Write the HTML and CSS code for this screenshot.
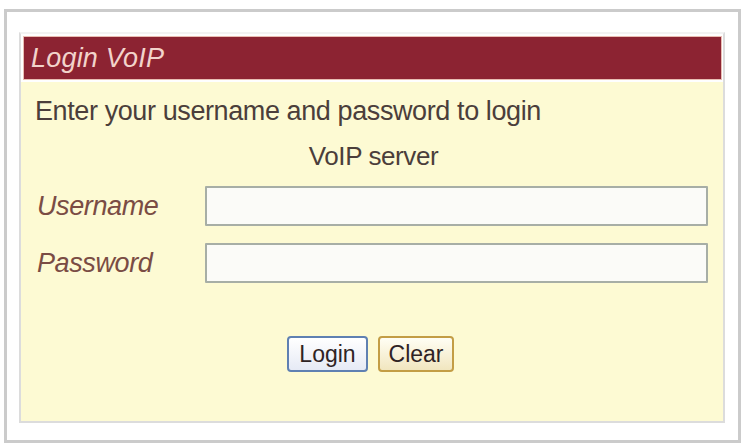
FILE: index.html
```html
<!DOCTYPE html>
<html lang="en">
<head>
<meta charset="utf-8">
<title>Login VoIP</title>
<link rel="stylesheet" href="styles.css">
</head>
<body>
<div class="frame">
  <div class="panel">
    <div class="panel-header">Login VoIP</div>
    <form class="panel-body">
      <p class="intro">Enter your username and password to login</p>
      <p class="server">VoIP server</p>
      <div class="row">
        <label class="label" for="user">Username</label>
        <input class="field" id="user" type="text">
      </div>
      <div class="row">
        <label class="label" for="pass">Password</label>
        <input class="field" id="pass" type="password">
      </div>
      <div class="actions">
        <button type="button" class="btn btn-login">Login</button>
        <button type="reset" class="btn btn-clear">Clear</button>
      </div>
    </form>
  </div>
</div>
</body>
</html>
```
FILE: styles.css
```css
* { box-sizing: border-box; }

html, body {
  margin: 0;
  background: #ffffff;
}

body {
  font-family: "Liberation Sans", Arial, sans-serif;
  padding: 9px 4px 5px 4px;
}

.frame {
  width: 737px;
  height: 434px;
  border: 3px solid #cbcbcb;
  padding: 20px 13px 17px 12px;
  background: #ffffff;
}

.panel {
  height: 100%;
  border: 2px solid #dcdcdc;
  border-top-color: #f2f2f2;
  padding-top: 3px;
  display: flex;
  flex-direction: column;
  background: #fefefe;
}

.panel-header {
  margin: 0 2px 0 3px;
  height: 42px;
  line-height: 42px;
  background: #8c2332;
  box-shadow: 0 0 0 1px #e9bdb3;
  color: #f2d3cb;
  font-style: italic;
  font-size: 27px;
  letter-spacing: 0.2px;
  padding-left: 7px;
}

.panel-body {
  flex: 1;
  margin: 3px 0 0 0;
  background: #fdfad3;
  padding: 14px 15px 0 14px;
  color: #4b3e3b;
}

.intro {
  margin: 0;
  font-size: 27px;
  letter-spacing: -0.4px;
  line-height: 30px;
}

.server {
  margin: 15px 0 0 0;
  font-size: 26px;
  letter-spacing: -0.4px;
  line-height: 30px;
  text-align: center;
  padding-left: 4px;
}

.row {
  display: flex;
  align-items: center;
  margin-top: 15px;
}

.row + .row {
  margin-top: 17px;
}

.label {
  width: 170px;
  padding-left: 2px;
  font-size: 27px;
  letter-spacing: -0.4px;
  font-style: italic;
  color: #7a4c44;
}

.field {
  flex: 1;
  height: 40px;
  border: 2px solid #a7aea6;
  border-radius: 1px;
  background: #fbfbf8;
  font-size: 20px;
  padding: 0 6px;
}

.actions {
  display: flex;
  justify-content: center;
  gap: 10px;
  margin-top: 53px;
  padding-right: 2px;
}

.btn {
  height: 36px;
  padding: 0 8px;
  font-family: "Liberation Sans", Arial, sans-serif;
  font-size: 23px;
  color: #2f2324;
  border-radius: 4px;
  cursor: pointer;
}

.btn-login {
  width: 81px;
  border: 2px solid #5f80b2;
  background: linear-gradient(#ffffff, #e6eaf5);
}

.btn-clear {
  width: 76px;
  border: 2px solid #c39d45;
  background: linear-gradient(#fffef4, #f1e6bf);
}
```
